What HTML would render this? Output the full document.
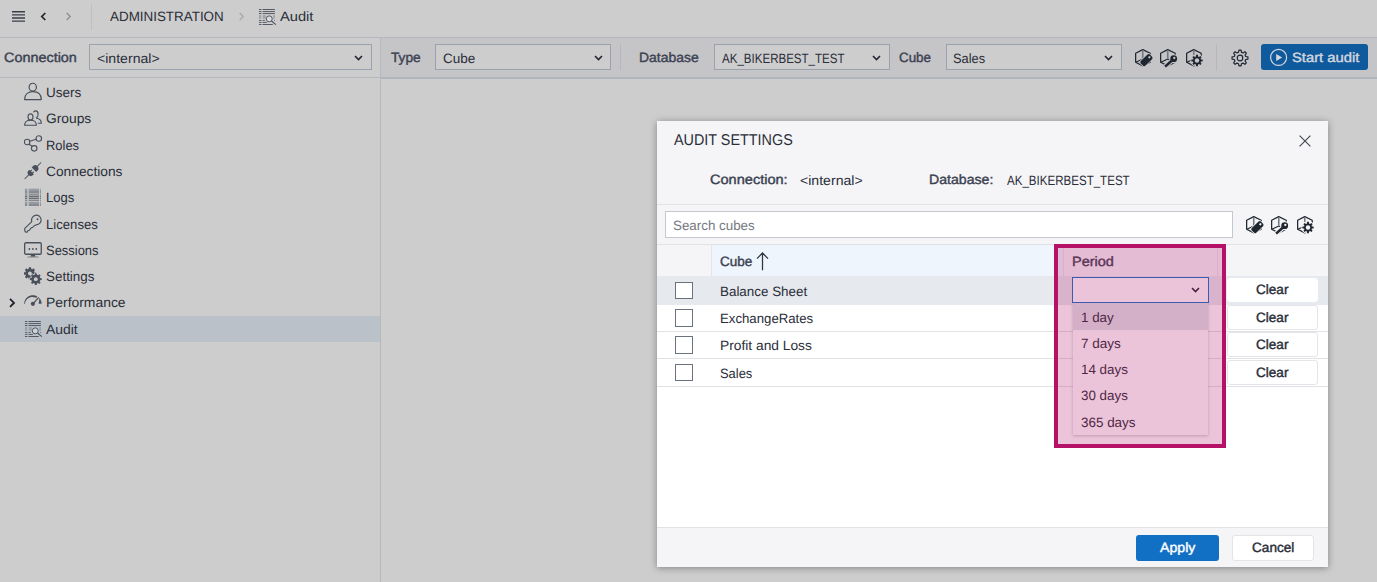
<!DOCTYPE html>
<html lang="en">
<head>
<meta charset="utf-8">
<title>Audit</title>
<style>
*{box-sizing:border-box;margin:0;padding:0}
html,body{width:1377px;height:582px;overflow:hidden}
body{background:#cdcdcd;font-family:"Liberation Sans",sans-serif;font-size:13.5px;color:#2a2e39;position:relative}
.abs{position:absolute}
.t{position:absolute;white-space:nowrap;line-height:20px;height:20px;transform-origin:0 0;display:block;text-rendering:geometricPrecision}
.b{-webkit-text-stroke:0.4px currentColor;color:#3c4252}
.combo{position:absolute;height:26px;top:44px;border:1px solid #99a2ad;background:#cdcdcd}
.cb{position:absolute;left:675px;width:18px;height:17px;border:1px solid #69727d;background:#fff}
.clr{position:absolute;left:1227px;width:91.2px;border:1px solid #e4e5e9;border-radius:3px;background:#fff}
.ln{position:absolute;left:657px;width:671px;height:1px;background:#e1e2e6}
</style>
</head>
<body>
<!-- chrome backgrounds -->
<div class="abs" style="left:0;top:37px;width:1377px;height:1px;background:#b3b8bf"></div>
<div class="abs" style="left:381px;top:38px;width:996px;height:39px;background:#c5c5c8"></div>
<div class="abs" style="left:0;top:77px;width:381px;height:1px;background:#b4babf"></div><div class="abs" style="left:381px;top:77px;width:996px;height:2px;background:#b0b5bc"></div>
<div class="abs" style="left:380px;top:38px;width:1px;height:544px;background:#b6babf"></div>
<div class="abs" style="left:0;top:316px;width:380px;height:26px;background:#bac1c9"></div>

<!-- top bar -->
<svg class="abs" style="left:12px;top:11px" width="13" height="11" viewBox="0 0 13 11"><g stroke="#3a3e48" stroke-width="1.4"><path d="M0 .8h13M0 3.9h13M0 7h13M0 10.1h13"/></g></svg>
<svg class="abs" style="left:40px;top:12px" width="7" height="9" viewBox="0 0 7 9"><path d="M5.3 1L1.8 4.5 5.3 8" fill="none" stroke="#1f232c" stroke-width="1.7"/></svg>
<svg class="abs" style="left:65px;top:12px" width="7" height="9" viewBox="0 0 7 9"><path d="M1.7 1L5.2 4.5 1.7 8" fill="none" stroke="#8d9096" stroke-width="1.4"/></svg>
<div class="abs" style="left:91px;top:4px;width:1px;height:26px;background:#bcbfc3"></div>
<span class="t" style="left:110.00px;top:7px;transform:scaleX(0.9932)">ADMINISTRATION</span>
<svg class="abs" style="left:238px;top:12px" width="7" height="9" viewBox="0 0 7 9"><path d="M1.7 1L5.2 4.5 1.7 8" fill="none" stroke="#a5a8ad" stroke-width="1.4"/></svg>
<svg class="abs" style="left:258px;top:6.5px" width="19" height="20" viewBox="0 0 19 20"><g fill="#4f5560" opacity="1"><rect x="0.95" y="2.025" width="2.25" height="0.95"/><rect x="4.7" y="2.025" width="12.2" height="0.95"/><rect x="0.95" y="4.125" width="2.25" height="0.95"/><rect x="4.7" y="4.125" width="12.2" height="0.95"/><rect x="0.95" y="6.125" width="2.25" height="0.95"/><rect x="4.7" y="6.125" width="12.2" height="0.95"/></g><g fill="#4f5560" opacity="0.4"><rect x="3.2" y="2.025" width="1.5" height="0.95"/><rect x="3.2" y="4.125" width="1.5" height="0.95"/><rect x="3.2" y="6.125" width="1.5" height="0.95"/><rect x="3.2" y="12.925" width="1.5" height="0.95"/><rect x="3.2" y="14.925" width="1.5" height="0.95"/><rect x="3.2" y="17.025" width="1.5" height="0.95"/></g><rect x="0.95" y="8.1" width="2.25" height="3.6" fill="#8d9299" opacity="0.7"/><rect x="4.7" y="8.1" width="3.1" height="3.6" fill="#8d9299" opacity="0.7"/><rect x="15.2" y="8.1" width="1.7" height="3.6" fill="#8d9299" opacity="0.7"/><g fill="#5b616b" opacity="1"><rect x="0.95" y="12.925" width="2.25" height="0.95"/><rect x="4.7" y="12.925" width="2.2" height="0.95"/><rect x="16.1" y="12.925" width="0.8" height="0.95"/></g><g fill="#4f5560" opacity="1"><rect x="0.95" y="14.925" width="2.25" height="0.95"/><rect x="4.7" y="14.925" width="4.1" height="0.95"/></g><g fill="#4f5560" opacity="1"><rect x="0.95" y="17.025" width="2.25" height="0.95"/><rect x="4.7" y="17.025" width="10.1" height="0.95"/></g><circle cx="11.25" cy="11.85" r="3.0" fill="rgba(255,255,255,.28)" stroke="#4a505b" stroke-width="0.95"/><path d="M13.5 14L17.8 17.7" stroke="#4a505b" stroke-width="1.05"/></svg><span class="t" style="left:280.00px;top:7px;transform:scaleX(1.0862)">Audit</span>

<!-- toolbar 2 -->
<span class="t b" style="left:4.00px;top:48px;transform:scaleX(1.0667)">Connection</span>
<div class="combo" style="left:89px;width:283px"></div><span class="t" style="left:97.00px;top:49px;transform:scaleX(1.0434)">&lt;internal&gt;</span>
<svg class="abs" style="left:354px;top:55px" width="9" height="6" viewBox="0 0 9 6"><path d="M1 1l3.5 3.5L8 1" fill="none" stroke="#22262f" stroke-width="1.6"/></svg>
<span class="t b" style="left:391.00px;top:48px;transform:scaleX(1.0157)">Type</span>
<div class="combo" style="left:435px;width:176px"></div><span class="t" style="left:443.00px;top:49px;transform:scaleX(1.0000)">Cube</span>
<svg class="abs" style="left:593.5px;top:55px" width="9" height="6" viewBox="0 0 9 6"><path d="M1 1l3.5 3.5L8 1" fill="none" stroke="#22262f" stroke-width="1.6"/></svg>
<div class="abs" style="left:620px;top:44px;width:1px;height:26px;background:#b4b8bd"></div>
<span class="t b" style="left:639.00px;top:48px;transform:scaleX(1.0319)">Database</span>
<div class="combo" style="left:714px;width:176px"></div><span class="t" style="left:722.00px;top:49px;transform:scaleX(0.8552)">AK_BIKERBEST_TEST</span>
<svg class="abs" style="left:872px;top:55px" width="9" height="6" viewBox="0 0 9 6"><path d="M1 1l3.5 3.5L8 1" fill="none" stroke="#22262f" stroke-width="1.6"/></svg>
<span class="t b" style="left:899.00px;top:48px;transform:scaleX(0.9912)">Cube</span>
<div class="combo" style="left:946px;width:176px"></div><span class="t" style="left:953.00px;top:49px;transform:scaleX(0.9502)">Sales</span>
<svg class="abs" style="left:1104px;top:55px" width="9" height="6" viewBox="0 0 9 6"><path d="M1 1l3.5 3.5L8 1" fill="none" stroke="#22262f" stroke-width="1.6"/></svg>
<svg class="abs" style="left:1134.5px;top:48.5px" width="20" height="20" viewBox="0 0 20 20"><path d="M7.75 0.65L15.2 4.3V13.3L7.75 16.9L0.65 13.3V4.3Z" fill="none" stroke="#1f2630" stroke-width="1.25" stroke-linejoin="round"/><path d="M7.75 1V9.4" stroke="#74797f" stroke-width="1.6"/><path d="M7.75 9.9L0.9 13.2M7.75 9.9L14.8 13.2" stroke="#1f2630" stroke-width="1.1"/><g transform="translate(11.4 11.1) rotate(-44)"><rect x="-6.4" y="-3.2" width="12.8" height="6.4" rx="1.7" fill="#1f2630" stroke="#c5c5c8" stroke-width="1.5" paint-order="stroke"/><circle cx="4.1" cy="0" r="1.15" fill="#c5c5c8"/></g></svg><svg class="abs" style="left:1159.5px;top:48.5px" width="20" height="20" viewBox="0 0 20 20"><path d="M7.75 0.65L15.2 4.3V13.3L7.75 16.9L0.65 13.3V4.3Z" fill="none" stroke="#1f2630" stroke-width="1.25" stroke-linejoin="round"/><path d="M7.75 1V9.4" stroke="#74797f" stroke-width="1.6"/><path d="M7.75 9.9L0.9 13.2M7.75 9.9L14.8 13.2" stroke="#1f2630" stroke-width="1.1"/><g transform="translate(13.7 9.7)"><path d="M-1.2 1.3L-8.2 7.6" stroke="#c5c5c8" stroke-width="4.8" stroke-linecap="butt"/><circle r="4.5" fill="#c5c5c8"/><path d="M-1.2 1.3L-8.6 7.9" stroke="#1f2630" stroke-width="2.6"/><circle r="3.4" fill="#1f2630"/><circle cx="0.6" cy="-0.7" r="1.15" fill="#c5c5c8"/></g></svg><svg class="abs" style="left:1185.5px;top:48.5px" width="20" height="20" viewBox="0 0 20 20"><path d="M7.75 0.65L15.2 4.3V13.3L7.75 16.9L0.65 13.3V4.3Z" fill="none" stroke="#1f2630" stroke-width="1.25" stroke-linejoin="round"/><path d="M7.75 1V9.4" stroke="#74797f" stroke-width="1.6"/><path d="M7.75 9.9L0.9 13.2M7.75 9.9L14.8 13.2" stroke="#1f2630" stroke-width="1.1"/><path d="M9.95 7.54L10.11 5.87L11.89 5.87L12.05 7.54L13.06 7.95L14.35 6.89L15.61 8.15L14.55 9.44L14.96 10.45L16.63 10.61L16.63 12.39L14.96 12.55L14.55 13.56L15.61 14.85L14.35 16.11L13.06 15.05L12.05 15.46L11.89 17.13L10.11 17.13L9.95 15.46L8.94 15.05L7.65 16.11L6.39 14.85L7.45 13.56L7.04 12.55L5.37 12.39L5.37 10.61L7.04 10.45L7.45 9.44L6.39 8.15L7.65 6.89L8.94 7.95Z" fill="#1f2630" stroke="#c5c5c8" stroke-width="2" stroke-linejoin="round" paint-order="stroke"/><circle cx="11.0" cy="11.5" r="2.2" fill="#c5c5c8"/></svg>
<div class="abs" style="left:1216px;top:44px;width:1px;height:27px;background:#b4b8bd"></div>
<svg class="abs" style="left:1230.9px;top:48.8px" width="18" height="18" viewBox="0 0 18 18"><path d="M7.49 3.30L7.94 1.07L10.06 1.07L10.51 3.30L11.96 3.90L13.85 2.64L15.36 4.15L14.10 6.04L14.70 7.49L16.93 7.94L16.93 10.06L14.70 10.51L14.10 11.96L15.36 13.85L13.85 15.36L11.96 14.10L10.51 14.70L10.06 16.93L7.94 16.93L7.49 14.70L6.04 14.10L4.15 15.36L2.64 13.85L3.90 11.96L3.30 10.51L1.07 10.06L1.07 7.94L3.30 7.49L3.90 6.04L2.64 4.15L4.15 2.64L6.04 3.90Z" fill="none" stroke="#1f2630" stroke-width="1.2" stroke-linejoin="round"/><circle cx="9" cy="9" r="2.8" fill="none" stroke="#1f2630" stroke-width="1.2"/></svg>
<div class="abs" style="left:1261px;top:44px;width:107px;height:26px;background:#0f599d;border-radius:3px"></div>
<svg class="abs" style="left:1269px;top:48px" width="19" height="19" viewBox="0 0 19 19"><circle cx="9.6" cy="9.4" r="8" fill="none" stroke="#d3d7dd" stroke-width="1.2"/><path d="M7.2 6v7l6-3.5z" fill="#d3d7dd"/></svg>
<span class="t b" style="left:1292.00px;top:48px;transform:scaleX(1.0939);color:#d3d7dd">Start audit</span>

<!-- tree -->
<svg class="abs" style="left:9px;top:297.9px" width="7" height="10" viewBox="0 0 7 10"><path d="M1 .9L5 4.9 1 8.9" fill="none" stroke="#1d212a" stroke-width="1.8"/></svg>
<svg class="abs" style="left:24px;top:82.35px" width="19" height="20" viewBox="0 0 19 20"><g fill="none" stroke="#4a505b" stroke-width="1.2"><ellipse cx="8.75" cy="5.15" rx="3.65" ry="3.9"/><path d="M0.6 17.6C0.6 12.5 4 9.7 8.95 9.7S17.3 12.5 17.3 17.6Z" stroke-linejoin="round"/></g></svg><svg class="abs" style="left:24px;top:108.68px" width="19" height="20" viewBox="0 0 19 20"><g fill="none" stroke="#4a505b" stroke-width="1.15" stroke-linecap="round"><path d="M9.7 2.9C10.3 2.2 11 1.9 11.7 1.9C13.2 1.9 14.1 3.3 14.1 5.3C14.1 7.0 13.4 8.3 12.4 8.8"/><path d="M12.9 9.3C15.8 9.8 17.3 11.6 17.3 14.2H14.3"/><ellipse cx="6.5" cy="7.9" rx="2.5" ry="3.05"/><path d="M0.6 16.2C0.6 12.9 2.8 11.2 6.5 11.2S12.4 12.9 12.4 16.2Z" stroke-linejoin="round"/></g></svg><svg class="abs" style="left:24px;top:135.01px" width="19" height="20" viewBox="0 0 19 20"><g fill="none" stroke="#4a505b" stroke-width="1.15"><circle cx="3.1" cy="7.0" r="2.75"/><circle cx="14.8" cy="3.5" r="2.75"/><circle cx="10.2" cy="13.3" r="2.75"/><path d="M5.8 6.2L12.1 4.3M4.9 9.2L8.3 11.3"/></g></svg><svg class="abs" style="left:24px;top:161.34px" width="19" height="20" viewBox="0 0 19 20"><g transform="translate(9.1 9.5) rotate(-45)"><path d="M-12 0H-4.5M5 0H11.3" stroke="#4a505b" stroke-width="1.0" fill="none"/><path d="M-2.1 -3.2H-3.2A3.2 3.2 0 0 0 -3.2 3.2H-2.1V1.9H-0.5V0.7H-2.1V-0.7H-0.5V-1.9H-2.1Z" fill="#4a505b"/><path d="M1.2 -3.2H2.9A3.2 3.2 0 0 1 2.9 3.2H1.2Z" fill="#4a505b"/></g></svg><svg class="abs" style="left:24px;top:186.77px" width="19" height="20" viewBox="0 0 19 20"><rect x="0.95" y="1.7" width="2.15" height="3.9" fill="#8d9299" opacity="0.85"/><rect x="4.9" y="1.7" width="10.1" height="3.9" fill="#8d9299" opacity="0.85"/><rect x="15.9" y="1.7" width="1" height="3.9" fill="#8d9299" opacity="0.85"/><rect x="0.95" y="14.7" width="2.15" height="3.9" fill="#8d9299" opacity="0.85"/><rect x="4.9" y="14.7" width="10.1" height="3.9" fill="#8d9299" opacity="0.85"/><rect x="15.9" y="14.7" width="1" height="3.9" fill="#8d9299" opacity="0.85"/><rect x="3.1" y="1.7" width="1.9" height="16.9" fill="#8d9299" opacity="0.25"/><g fill="#6b717a" opacity="1"><rect x="0.95" y="4.65" width="2.15" height="0.9"/><rect x="4.9" y="4.65" width="10.1" height="0.9"/><rect x="15.9" y="4.65" width="1" height="0.9"/><rect x="0.95" y="17.65" width="2.15" height="0.9"/><rect x="4.9" y="17.65" width="10.1" height="0.9"/><rect x="15.9" y="17.65" width="1" height="0.9"/></g><g fill="#626872" opacity="1"><rect x="0.95" y="6.625" width="2.15" height="0.95"/><rect x="4.9" y="6.625" width="10.1" height="0.95"/><rect x="15.9" y="6.625" width="1" height="0.95"/><rect x="0.95" y="12.725" width="2.15" height="0.95"/><rect x="4.9" y="12.725" width="10.1" height="0.95"/><rect x="15.9" y="12.725" width="1" height="0.95"/></g><g fill="#434a55" opacity="1"><rect x="0.95" y="8.675" width="2.15" height="1.05"/><rect x="4.9" y="8.675" width="10.1" height="1.05"/><rect x="15.9" y="8.675" width="1" height="1.05"/><rect x="0.95" y="10.675" width="2.15" height="1.05"/><rect x="4.9" y="10.675" width="10.1" height="1.05"/><rect x="15.9" y="10.675" width="1" height="1.05"/></g></svg><svg class="abs" style="left:24px;top:214px" width="19" height="20" viewBox="0 0 19 20"><g fill="none" stroke="#4a505b" stroke-width="1.15" stroke-linejoin="round"><path d="M12.3 10.8A4.8 4.8 0 1 0 7.8 7.6L0.8 14.3V16.8Q0.8 18.1 2.2 18.1H3.3L4.0 16.5L5.3 16.3L7.4 13.7L8.9 13.2L10.3 11.7Z"/></g><circle cx="13.5" cy="5.3" r="0.95" fill="#4a505b"/></svg><svg class="abs" style="left:24px;top:240.33px" width="19" height="20" viewBox="0 0 19 20"><rect x="0.65" y="2.75" width="16.6" height="11.5" rx="1.2" fill="none" stroke="#4a505b" stroke-width="1.3"/><g fill="#4a505b"><circle cx="5.4" cy="9" r="0.9"/><circle cx="8.9" cy="9" r="0.9"/><circle cx="12.3" cy="9" r="0.9"/><rect x="6.8" y="14.8" width="4.4" height="1.8"/><rect x="3.5" y="16.5" width="11" height="1" opacity="0.6"/></g></svg><svg class="abs" style="left:24px;top:266.66px" width="19" height="20" viewBox="0 0 19 20"><path d="M4.79 2.12L5.00 0.54L6.88 0.54L7.09 2.12L8.20 2.58L9.47 1.62L10.79 2.94L9.83 4.21L10.29 5.32L11.87 5.53L11.87 7.41L10.29 7.62L9.83 8.73L10.79 10.00L9.47 11.32L8.20 10.36L7.09 10.82L6.88 12.40L5.00 12.40L4.79 10.82L3.68 10.36L2.41 11.32L1.09 10.00L2.05 8.73L1.59 7.62L0.01 7.41L0.01 5.53L1.59 5.32L2.05 4.21L1.09 2.94L2.41 1.62L3.68 2.58Z" fill="#4a505b" stroke="#4a505b" stroke-width="0.4" stroke-linejoin="round"/><circle cx="5.94" cy="6.47" r="1.9" fill="#cdcdcd"/><path d="M10.65 7.79L10.86 6.21L12.74 6.21L12.95 7.79L14.06 8.25L15.33 7.29L16.65 8.61L15.69 9.88L16.15 10.99L17.73 11.20L17.73 13.08L16.15 13.29L15.69 14.40L16.65 15.67L15.33 16.99L14.06 16.03L12.95 16.49L12.74 18.07L10.86 18.07L10.65 16.49L9.54 16.03L8.27 16.99L6.95 15.67L7.91 14.40L7.45 13.29L5.87 13.08L5.87 11.20L7.45 10.99L7.91 9.88L6.95 8.61L8.27 7.29L9.54 8.25Z" fill="#4a505b" stroke="#cdcdcd" stroke-width="1.6" stroke-linejoin="round" paint-order="stroke"/><circle cx="11.8" cy="12.14" r="1.9" fill="#cdcdcd"/></svg><svg class="abs" style="left:24px;top:292.39px" width="19" height="20" viewBox="0 0 19 20"><path d="M0.20 11.85L0.23 11.09L0.33 10.34L0.50 9.60L0.72 8.87L1.02 8.17L1.37 7.50L1.77 6.86L2.24 6.26L2.75 5.70L3.31 5.19L3.91 4.72L4.55 4.32L5.22 3.97L5.92 3.67L6.65 3.45L7.39 3.28L8.14 3.18L8.90 3.15L9.66 3.18L10.41 3.28L11.15 3.45L11.88 3.67L12.58 3.97L13.25 4.32L12.25 6.05L11.73 5.78L11.19 5.55L10.63 5.38L10.06 5.25L9.49 5.16L8.90 5.07L8.30 5.03L7.70 5.05L7.10 5.11L6.49 5.24L5.90 5.41L5.32 5.64L4.75 5.92L4.21 6.26L3.69 6.64L3.21 7.07L2.76 7.55L2.35 8.07L1.99 8.63L1.67 9.22L1.41 9.84L1.20 10.49L1.05 11.16L0.95 11.85Z" fill="#4a505b"/><path d="M15.56 6.26L16.43 7.50L17.08 8.87L17.47 10.34L17.60 11.85L14.70 11.85L14.71 10.83L14.91 9.66L15.14 8.25L15.18 6.58Z" fill="#4a505b"/><circle cx="8.9" cy="11.85" r="2.1" fill="#4a505b"/><path d="M8.9 11.85L14.7 5.5" stroke="#4a505b" stroke-width="1.15"/></svg><svg class="abs" style="left:24px;top:319.32px" width="19" height="20" viewBox="0 0 19 20"><g fill="#4f5560" opacity="1"><rect x="0.95" y="2.025" width="2.25" height="0.95"/><rect x="4.7" y="2.025" width="12.2" height="0.95"/><rect x="0.95" y="4.125" width="2.25" height="0.95"/><rect x="4.7" y="4.125" width="12.2" height="0.95"/><rect x="0.95" y="6.125" width="2.25" height="0.95"/><rect x="4.7" y="6.125" width="12.2" height="0.95"/></g><g fill="#4f5560" opacity="0.4"><rect x="3.2" y="2.025" width="1.5" height="0.95"/><rect x="3.2" y="4.125" width="1.5" height="0.95"/><rect x="3.2" y="6.125" width="1.5" height="0.95"/><rect x="3.2" y="12.925" width="1.5" height="0.95"/><rect x="3.2" y="14.925" width="1.5" height="0.95"/><rect x="3.2" y="17.025" width="1.5" height="0.95"/></g><rect x="0.95" y="8.1" width="2.25" height="3.6" fill="#8d9299" opacity="0.7"/><rect x="4.7" y="8.1" width="3.1" height="3.6" fill="#8d9299" opacity="0.7"/><rect x="15.2" y="8.1" width="1.7" height="3.6" fill="#8d9299" opacity="0.7"/><g fill="#5b616b" opacity="1"><rect x="0.95" y="12.925" width="2.25" height="0.95"/><rect x="4.7" y="12.925" width="2.2" height="0.95"/><rect x="16.1" y="12.925" width="0.8" height="0.95"/></g><g fill="#4f5560" opacity="1"><rect x="0.95" y="14.925" width="2.25" height="0.95"/><rect x="4.7" y="14.925" width="4.1" height="0.95"/></g><g fill="#4f5560" opacity="1"><rect x="0.95" y="17.025" width="2.25" height="0.95"/><rect x="4.7" y="17.025" width="10.1" height="0.95"/></g><circle cx="11.25" cy="11.85" r="3.0" fill="rgba(255,255,255,.28)" stroke="#4a505b" stroke-width="0.95"/><path d="M13.5 14L17.8 17.7" stroke="#4a505b" stroke-width="1.05"/></svg>
<span class="t" style="left:46.00px;top:83px;transform:scaleX(1.0015)">Users</span><span class="t" style="left:46.00px;top:109px;transform:scaleX(1.0226)">Groups</span><span class="t" style="left:46.00px;top:136px;transform:scaleX(0.9582)">Roles</span><span class="t" style="left:46.00px;top:162px;transform:scaleX(1.0189)">Connections</span><span class="t" style="left:46.00px;top:188px;transform:scaleX(0.9665)">Logs</span><span class="t" style="left:46.00px;top:215px;transform:scaleX(0.9724)">Licenses</span><span class="t" style="left:46.00px;top:241px;transform:scaleX(0.9585)">Sessions</span><span class="t" style="left:46.00px;top:267px;transform:scaleX(0.9932)">Settings</span><span class="t" style="left:46.00px;top:293px;transform:scaleX(1.0301)">Performance</span><span class="t" style="left:46.00px;top:320px;transform:scaleX(1.0309)">Audit</span>

<!-- dialog -->
<div class="abs" style="left:657px;top:121px;width:671px;height:446px;background:#f5f5f7;box-shadow:0 1px 7px rgba(0,0,0,.36)"></div>
<div class="ln" style="top:204px"></div>
<div class="abs" style="left:657px;top:244px;width:671px;height:284px;background:#fff;border-top:1px solid #e1e2e6;border-bottom:1px solid #e1e2e6"></div>
<span class="t" style="left:674.00px;top:131px;transform:scaleX(0.9218);font-size:15.6px">AUDIT SETTINGS</span>
<svg class="abs" style="left:1299.4px;top:134.8px" width="12" height="12" viewBox="0 0 12 12"><path d="M.6.6l10.8 10.8M11.4.6L.6 11.4" stroke="#474d58" stroke-width="1.25" fill="none"/></svg>
<span class="t b" style="left:710.00px;top:170px;transform:scaleX(1.0780)">Connection:</span><span class="t" style="left:800.00px;top:171px;transform:scaleX(1.0434)">&lt;internal&gt;</span><span class="t b" style="left:929.00px;top:170px;transform:scaleX(1.0449)">Database:</span><span class="t" style="left:1007.00px;top:171px;transform:scaleX(0.8559)">AK_BIKERBEST_TEST</span>
<div class="abs" style="left:665px;top:211px;width:568px;height:27px;background:#fff;border:1px solid #c3c8cf"></div>
<span class="t" style="left:673.00px;top:216px;transform:scaleX(0.9902);color:#757982">Search cubes</span>
<svg class="abs" style="left:1245.5px;top:215.5px" width="20" height="20" viewBox="0 0 20 20"><path d="M7.75 0.65L15.2 4.3V13.3L7.75 16.9L0.65 13.3V4.3Z" fill="none" stroke="#1f2630" stroke-width="1.25" stroke-linejoin="round"/><path d="M7.75 1V9.4" stroke="#74797f" stroke-width="1.6"/><path d="M7.75 9.9L0.9 13.2M7.75 9.9L14.8 13.2" stroke="#1f2630" stroke-width="1.1"/><g transform="translate(11.4 11.1) rotate(-44)"><rect x="-6.4" y="-3.2" width="12.8" height="6.4" rx="1.7" fill="#1f2630" stroke="#f5f5f7" stroke-width="1.5" paint-order="stroke"/><circle cx="4.1" cy="0" r="1.15" fill="#f5f5f7"/></g></svg><svg class="abs" style="left:1270.5px;top:215.5px" width="20" height="20" viewBox="0 0 20 20"><path d="M7.75 0.65L15.2 4.3V13.3L7.75 16.9L0.65 13.3V4.3Z" fill="none" stroke="#1f2630" stroke-width="1.25" stroke-linejoin="round"/><path d="M7.75 1V9.4" stroke="#74797f" stroke-width="1.6"/><path d="M7.75 9.9L0.9 13.2M7.75 9.9L14.8 13.2" stroke="#1f2630" stroke-width="1.1"/><g transform="translate(13.7 9.7)"><path d="M-1.2 1.3L-8.2 7.6" stroke="#f5f5f7" stroke-width="4.8" stroke-linecap="butt"/><circle r="4.5" fill="#f5f5f7"/><path d="M-1.2 1.3L-8.6 7.9" stroke="#1f2630" stroke-width="2.6"/><circle r="3.4" fill="#1f2630"/><circle cx="0.6" cy="-0.7" r="1.15" fill="#f5f5f7"/></g></svg><svg class="abs" style="left:1296.6px;top:215.5px" width="20" height="20" viewBox="0 0 20 20"><path d="M7.75 0.65L15.2 4.3V13.3L7.75 16.9L0.65 13.3V4.3Z" fill="none" stroke="#1f2630" stroke-width="1.25" stroke-linejoin="round"/><path d="M7.75 1V9.4" stroke="#74797f" stroke-width="1.6"/><path d="M7.75 9.9L0.9 13.2M7.75 9.9L14.8 13.2" stroke="#1f2630" stroke-width="1.1"/><path d="M9.95 7.54L10.11 5.87L11.89 5.87L12.05 7.54L13.06 7.95L14.35 6.89L15.61 8.15L14.55 9.44L14.96 10.45L16.63 10.61L16.63 12.39L14.96 12.55L14.55 13.56L15.61 14.85L14.35 16.11L13.06 15.05L12.05 15.46L11.89 17.13L10.11 17.13L9.95 15.46L8.94 15.05L7.65 16.11L6.39 14.85L7.45 13.56L7.04 12.55L5.37 12.39L5.37 10.61L7.04 10.45L7.45 9.44L6.39 8.15L7.65 6.89L8.94 7.95Z" fill="#1f2630" stroke="#f5f5f7" stroke-width="2" stroke-linejoin="round" paint-order="stroke"/><circle cx="11.0" cy="11.5" r="2.2" fill="#f5f5f7"/></svg>
<!-- header -->
<div class="abs" style="left:657px;top:245px;width:671px;height:31px;background:#f5f5f7"></div>
<div class="abs" style="left:711px;top:245px;width:352px;height:31px;background:#eef5fd;border-left:1px solid #e3e5e9"></div>
<span class="t b" style="left:720.00px;top:252px;transform:scaleX(1.0008)">Cube</span>
<svg class="abs" style="left:756.1px;top:251.6px" width="13" height="19" viewBox="0 0 13 19"><path d="M6.5 1v17.2M1 6.6L6.5 1l5.5 5.6" stroke="#30343f" stroke-width="1.25" fill="none"/></svg>
<!-- rows -->
<div class="abs" style="left:657px;top:276px;width:671px;height:28.6px;background:#e6e9ed"></div>
<div class="ln" style="top:331px"></div>
<div class="ln" style="top:358px"></div>
<div class="ln" style="top:386px"></div>
<div class="cb" style="top:282px"></div><div class="cb" style="top:309.3px;height:17.8px"></div><div class="cb" style="top:336.3px;height:17.6px"></div><div class="cb" style="top:364px"></div>
<span class="t" style="left:720.00px;top:282px;transform:scaleX(0.9928)">Balance Sheet</span><span class="t" style="left:720.00px;top:309px;transform:scaleX(0.9781)">ExchangeRates</span><span class="t" style="left:720.00px;top:336px;transform:scaleX(1.0203)">Profit and Loss</span><span class="t" style="left:720.00px;top:364px;transform:scaleX(0.9563)">Sales</span>
<div class="abs" style="left:1063px;top:247px;width:1px;height:29px;background:#e3e5e9"></div>
<div class="abs" style="left:1217px;top:247px;width:1px;height:29px;background:#e3e5e9"></div>
<span class="t b" style="left:1072.00px;top:252px;transform:scaleX(1.0720)">Period</span>
<!-- clear buttons -->
<div class="clr" style="top:277.5px;height:24.7px;border-color:#fff"></div><div class="clr" style="top:305.4px;height:24.8px"></div><div class="clr" style="top:332.4px;height:24.6px"></div><div class="clr" style="top:359.6px;height:25.7px"></div>
<span class="t b" style="left:1256.00px;top:280px;transform:scaleX(1.0047);color:#2a2e39">Clear</span><span class="t b" style="left:1256.00px;top:308px;transform:scaleX(1.0047);color:#2a2e39">Clear</span><span class="t b" style="left:1256.00px;top:335px;transform:scaleX(1.0047);color:#2a2e39">Clear</span><span class="t b" style="left:1256.00px;top:363px;transform:scaleX(1.0047);color:#2a2e39">Clear</span>
<!-- combo + list -->
<div class="abs" style="left:1072.6px;top:302px;width:135.6px;height:133.2px;background:#fff;box-shadow:0 1px 3px rgba(0,0,0,.22)"></div>
<div class="abs" style="left:1072.6px;top:302px;width:135.6px;height:27.8px;background:#dfe3e8"></div>
<div class="abs" style="left:1072px;top:277px;width:137px;height:26px;background:#fff;border:1px solid #1173c8"></div>
<svg class="abs" style="left:1191.3px;top:287px" width="9" height="6" viewBox="0 0 9 6"><path d="M1 1l3.5 3.5L8 1" fill="none" stroke="#22262f" stroke-width="1.6"/></svg>
<span class="t" style="left:1081.00px;top:308px;transform:scaleX(0.9906)">1 day</span><span class="t" style="left:1081.00px;top:334px;transform:scaleX(1.0019)">7 days</span><span class="t" style="left:1081.00px;top:360px;transform:scaleX(0.9923)">14 days</span><span class="t" style="left:1081.00px;top:386px;transform:scaleX(0.9903)">30 days</span><span class="t" style="left:1081.00px;top:413px;transform:scaleX(0.9953)">365 days</span>
<!-- highlight -->
<div class="abs" style="left:1054.4px;top:244px;width:171.5px;height:203.8px;border:4px solid #b51267;background:rgba(181,18,103,.25)"></div>
<!-- footer -->
<div class="abs" style="left:1136px;top:535px;width:83px;height:26px;background:#1170c4;border-radius:3px"></div>
<span class="t b" style="left:1160.00px;top:538px;transform:scaleX(1.0482);color:#fff">Apply</span>
<div class="abs" style="left:1232.4px;top:535.2px;width:81.4px;height:25.6px;background:#fff;border:1px solid #e3e4e8;border-radius:3px"></div>
<span class="t b" style="left:1252.00px;top:538px;transform:scaleX(1.0080);color:#2a2e39">Cancel</span>
</body>
</html>
